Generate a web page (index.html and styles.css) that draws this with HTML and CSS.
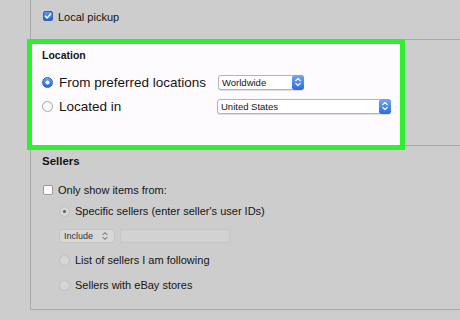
FILE: index.html
```html
<!DOCTYPE html>
<html lang="en">

<head>
  <meta charset="UTF-8">
  <title>Location and sellers</title>
  <link rel="stylesheet" href="styles.css">
</head>

<body>

  <div class="panel">

    <!-- Local pickup -->
    <div class="pickup">
      <span class="check checked">
        <svg viewBox="0 0 10 10" width="10" height="10"><path d="M2.4 5.2 L4.2 7 L7.6 3" fill="none" stroke="#fff" stroke-width="1.6" stroke-linecap="round" stroke-linejoin="round"/></svg>
      </span>
      <span class="label">Local pickup</span>
    </div>

    <!-- Location (highlighted) -->
    <div class="location-row">
      <div class="location">
        <div class="location-title">Location</div>

        <div class="loc-line first">
          <div class="loc-label">
            <span class="radio blue"></span>
            <span>From preferred locations</span>
          </div>
          <div class="select worldwide">
            <span class="select-text">Worldwide</span>
            <span class="stepper">
              <svg viewBox="0 0 12 14" width="12" height="14"><path d="M3.8 5.6 L6 3.4 L8.2 5.6 M3.8 8.4 L6 10.6 L8.2 8.4" fill="none" stroke="#fff" stroke-width="1.3" stroke-linecap="round" stroke-linejoin="round"/></svg>
            </span>
          </div>
        </div>

        <div class="loc-line">
          <div class="loc-label">
            <span class="radio"></span>
            <span>Located in</span>
          </div>
          <div class="select country">
            <span class="select-text">United States</span>
            <span class="stepper">
              <svg viewBox="0 0 12 14" width="12" height="14"><path d="M3.8 5.6 L6 3.4 L8.2 5.6 M3.8 8.4 L6 10.6 L8.2 8.4" fill="none" stroke="#fff" stroke-width="1.3" stroke-linecap="round" stroke-linejoin="round"/></svg>
            </span>
          </div>
        </div>
      </div>
      <div class="location-rest"></div>
    </div>

    <!-- Sellers -->
    <div class="sellers">
      <div class="sellers-title">Sellers</div>

      <div class="row only">
        <span class="check"></span>
        <span class="label">Only show items from:</span>
      </div>

      <div class="sub">
        <div class="row specific">
          <span class="radio dim dotted"></span>
          <span class="label">Specific sellers (enter seller's user IDs)</span>
        </div>

        <div class="include-row">
          <div class="include">
            <span>Include</span>
            <svg viewBox="0 0 8 12" width="8" height="12"><path d="M2 4.6 L4 2.6 L6 4.6 M2 7.4 L4 9.4 L6 7.4" fill="none" stroke="#555" stroke-width="1" stroke-linecap="round" stroke-linejoin="round"/></svg>
          </div>
          <div class="ids-field"></div>
        </div>

        <div class="row list">
          <span class="radio dim"></span>
          <span class="label">List of sellers I am following</span>
        </div>

        <div class="row ebay">
          <span class="radio dim"></span>
          <span class="label">Sellers with eBay stores</span>
        </div>
      </div>
    </div>

  </div>

</body>

</html>
```

FILE: styles.css
```css
* {
  box-sizing: border-box;
}

body {
  margin: 0;
  font-family: "Liberation Sans", Arial, sans-serif;
  background: #cdcdcd;
  color: #151515;
  overflow: hidden;
}

.panel {
  margin-left: 30px;
  height: 310px;
  border-left: 1px solid #a9a9a9;
  border-bottom: 1px solid #a9a9a9;
}

/* checkboxes and radios */
.check {
  flex: none;
  display: inline-flex;
  width: 10px;
  height: 10px;
  border: 1px solid #9a9a9a;
  border-radius: 2px;
  background: #fbfbfb;
}

.check.checked {
  border-color: #2c5fc0;
  background: linear-gradient(#5d97ef, #2466d8);
}

.check.checked svg {
  margin: -1px;
}

.radio {
  flex: none;
  width: 11px;
  height: 11px;
  border-radius: 50%;
  border: 1px solid #a6a6a6;
  background: #fafafa;
}

.radio.blue {
  border-color: #2f64c4;
  background: radial-gradient(circle, #fff 0 1.8px, transparent 2.3px), linear-gradient(#6aa3f2, #2468dc);
}

.radio.dim {
  border-color: #c0c0c0;
  background: #d6d6d6;
}

.radio.dotted {
  background: radial-gradient(circle, #666 0 1.2px, transparent 1.8px), #d6d6d6;
}

.label {
  font-size: 11px;
  line-height: 12px;
  white-space: nowrap;
}

/* local pickup */
.pickup {
  display: flex;
  align-items: center;
  gap: 5px;
  height: 39px;
  padding: 11px 0 0 12px;
  align-items: flex-start;
}

/* location box */
.location-row {
  display: flex;
  align-items: flex-start;
  margin-left: -4px;
}

.location {
  flex: none;
  width: 378px;
  height: 111px;
  border: 5px solid #30ef30;
  background: #fdfbfd;
  padding: 5px 0 0 10px;
}

.location-rest {
  flex: 1;
  height: 107px;
  border-top: 1px solid #a9a9a9;
  border-bottom: 1px solid #a9a9a9;
}

.location-title {
  font-size: 10.5px;
  font-weight: bold;
  line-height: 13px;
}

.loc-line {
  display: flex;
  align-items: center;
  height: 16px;
  margin-top: 8px;
}

.loc-line.first {
  margin-top: 12px;
}

.loc-label {
  flex: none;
  width: 176px;
  display: flex;
  align-items: center;
  gap: 6px;
  font-size: 13.5px;
  white-space: nowrap;
}

.select {
  display: flex;
  align-items: center;
  justify-content: space-between;
  height: 15px;
  border: 1px solid #b4b4b4;
  border-radius: 3px;
  background: #fff;
  padding-left: 3px;
  box-shadow: 0 1px 1px rgba(0, 0, 0, 0.12);
}

.select.worldwide {
  width: 86px;
}

.select.country {
  width: 174px;
  margin-left: -1px;
}

.select-text {
  font-size: 9.5px;
}

.stepper {
  display: flex;
  width: 12px;
  height: 15px;
  margin: -1px -1px -1px 0;
  border-radius: 3px;
  background: linear-gradient(#72a8f3, #2a6bdc);
}

.stepper svg {
  margin-top: 0.5px;
}

/* sellers */
.sellers {
  padding: 4px 0 0 11px;
}

.sellers-title {
  font-size: 11.5px;
  font-weight: bold;
  line-height: 14px;
}

.row {
  display: flex;
  align-items: center;
  gap: 5px;
  height: 12px;
}

.row.only {
  margin-top: 16px;
  margin-left: 1px;
}

.sub {
  margin-left: 17px;
}

.row.specific {
  margin-top: 9px;
}

.row.list {
  margin-top: 11px;
}

.row.ebay {
  margin-top: 13px;
}

.include-row {
  display: flex;
  gap: 5px;
  margin-top: 12px;
  height: 14px;
}

.include {
  display: flex;
  align-items: center;
  justify-content: space-between;
  width: 56px;
  padding: 0 5px 0 4px;
  border: 1px solid #c4c4c4;
  border-radius: 3px;
  background: #d7d7d7;
  font-size: 9px;
  color: #333;
}

.ids-field {
  width: 110px;
  border: 1px solid #c6c6c6;
  background: #d2d2d2;
}
```
